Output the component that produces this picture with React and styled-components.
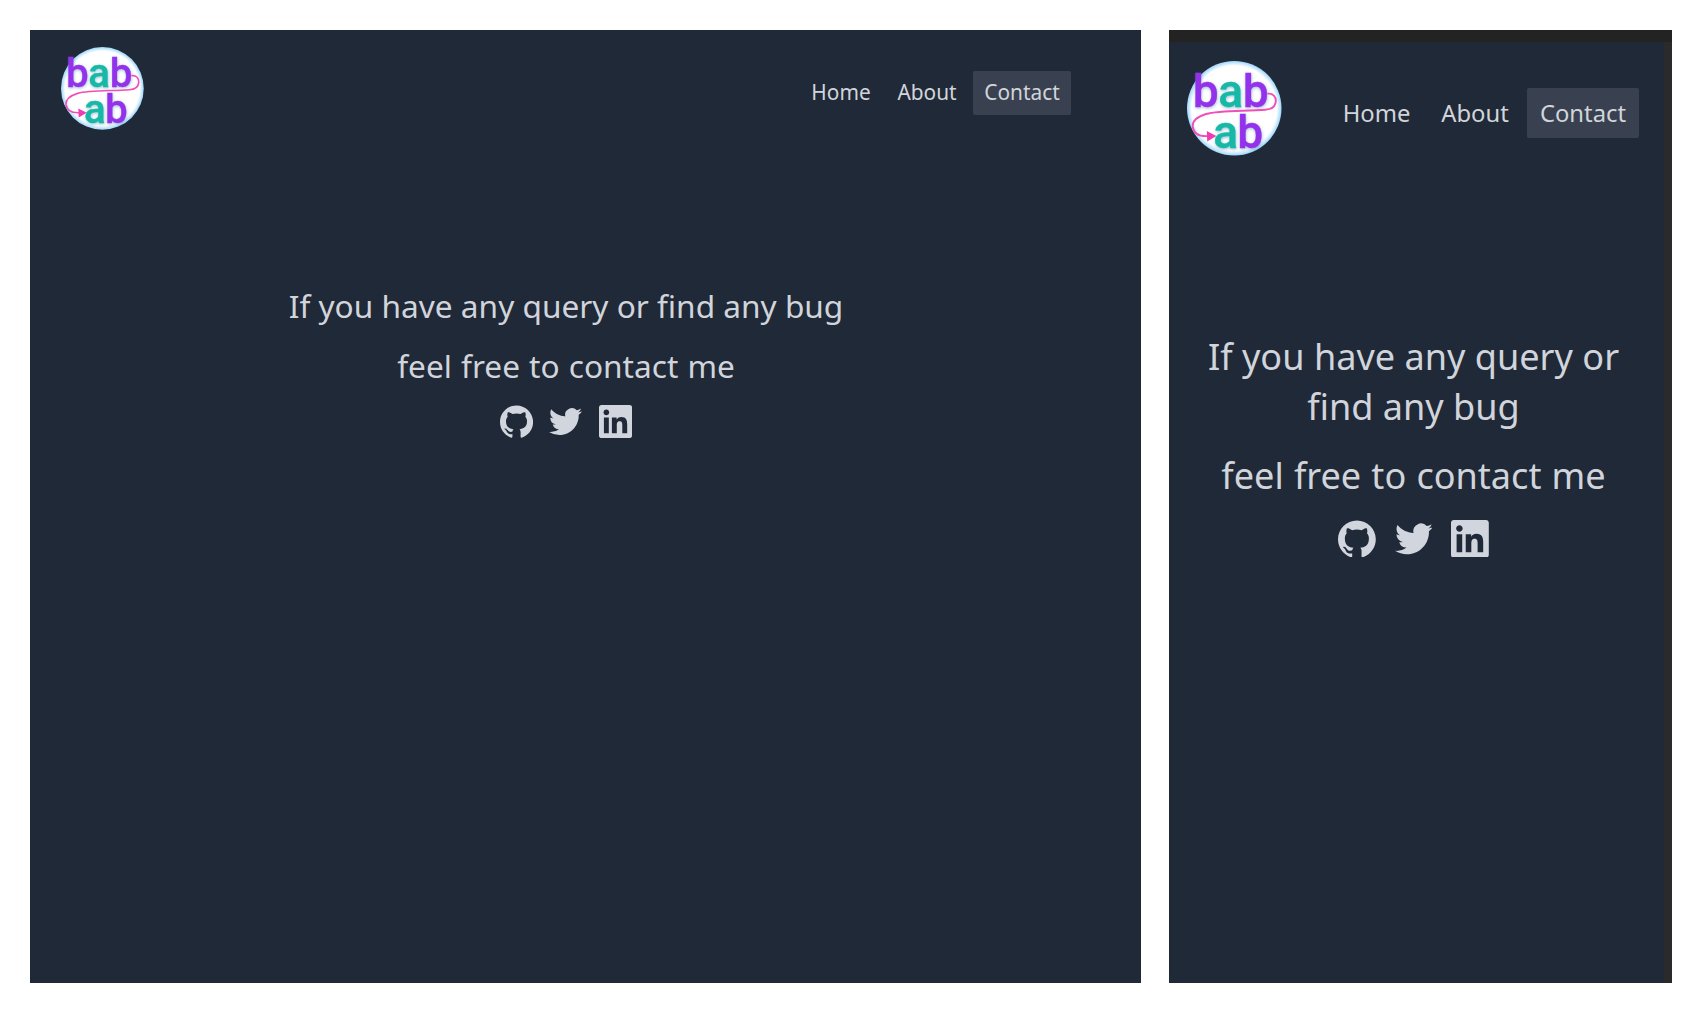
import React from 'react';
import styled, { createGlobalStyle } from 'styled-components';

const GlobalStyle = createGlobalStyle`
  *, *::before, *::after { box-sizing: border-box; }
  body { margin: 0; background: #fff; }
`;

const Page = styled.main`
  display: flex;
  gap: 28px;
  width: 1701px;
  height: 1012px;
  padding: 30px 29px 29px 30px;
  font-family: 'Noto Sans', 'Open Sans', sans-serif;
  color: #d1d5db;
`;

const Frame = styled.section`
  width: ${(p) => (p.$mobile ? '503px' : '1111px')};
  height: 953px;
  padding: ${(p) => (p.$mobile ? '12px 8px 0 0' : '0')};
  background: linear-gradient(#232323 12px, #2a2a2c 12px);
`;

const Screen = styled.div`
  height: 100%;
  background: #202937;
  font-size: ${(p) => (p.$mobile ? '18.9px' : '16.55px')};
`;

const Header = styled.header`
  display: flex;
  justify-content: space-between;
  align-items: flex-start;
  padding: ${(p) => (p.$mobile ? '19px 25px 0 18px' : '17px 70px 0 30.5px')};
  height: ${(p) => (p.$mobile ? '289px' : '254px')};
`;

const LogoMark = styled.svg`
  display: block;
  width: 5em;
  height: 5em;
  overflow: visible;
`;

const Nav = styled.nav`
  display: flex;
  gap: ${(p) => (p.$mobile ? '5px' : '4px')};
  padding-top: ${(p) => (p.$mobile ? '27px' : '24px')};
`;

const NavItem = styled.a`
  display: flex;
  align-items: center;
  justify-content: center;
  height: 2.65em;
  width: ${(p) => p.$width}px;
  border-radius: 2px;
  background: ${(p) => (p.$active ? '#394150' : 'transparent')};
`;

const NavLabel = styled.span`
  font-size: 1.26em;
  line-height: 1.3;
`;

const Content = styled.div`
  display: flex;
  flex-direction: column;
  align-items: center;
  padding-right: ${(p) => (p.$mobile ? '6px' : '39px')};
`;

const Message = styled.p`
  margin: 0 0 ${(p) => (p.$mobile ? '19px' : '16.5px')};
  font-size: 1.91em;
  line-height: ${(p) => (p.$mobile ? '50px' : '43.5px')};
  text-align: center;
`;

const Line = styled.span`
  display: block;
  white-space: nowrap;
  word-spacing: ${(p) => p.$space || 0}px;
`;

const Socials = styled.div`
  display: flex;
  gap: 1em;
  margin-top: 0.5px;
`;

const SocialIcon = styled.svg`
  display: block;
  width: 2em;
  height: 2em;
  fill: #d1d5de;
`;

const icons = [
  'M12 .297c-6.63 0-12 5.373-12 12 0 5.303 3.438 9.8 8.205 11.385.6.113.82-.258.82-.577 0-.285-.01-1.04-.015-2.04-3.338.724-4.042-1.61-4.042-1.61C4.422 18.07 3.633 17.7 3.633 17.7c-1.087-.744.084-.729.084-.729 1.205.084 1.838 1.236 1.838 1.236 1.07 1.835 2.809 1.305 3.495.998.108-.776.417-1.305.76-1.605-2.665-.3-5.466-1.332-5.466-5.93 0-1.31.465-2.38 1.235-3.22-.135-.303-.54-1.523.105-3.176 0 0 1.005-.322 3.3 1.23.96-.267 1.98-.399 3-.405 1.02.006 2.04.138 3 .405 2.28-1.552 3.285-1.23 3.285-1.23.645 1.653.24 2.873.12 3.176.765.84 1.23 1.91 1.23 3.22 0 4.61-2.805 5.625-5.475 5.92.42.36.81 1.096.81 2.22 0 1.606-.015 2.896-.015 3.286 0 .315.21.69.825.57C20.565 22.092 24 17.592 24 12.297c0-6.627-5.373-12-12-12',
  'M23.953 4.57a10 10 0 01-2.825.775 4.958 4.958 0 002.163-2.723c-.951.555-2.005.959-3.127 1.184a4.92 4.92 0 00-8.384 4.482C7.69 8.095 4.067 6.13 1.64 3.162a4.822 4.822 0 00-.666 2.475c0 1.71.87 3.213 2.188 4.096a4.904 4.904 0 01-2.228-.616v.06a4.923 4.923 0 003.946 4.827 4.996 4.996 0 01-2.212.085 4.936 4.936 0 004.604 3.417 9.867 9.867 0 01-6.102 2.105c-.39 0-.779-.023-1.17-.067a13.995 13.995 0 007.557 2.209c9.053 0 13.998-7.496 13.998-13.985 0-.21 0-.42-.015-.63A9.935 9.935 0 0024 4.59z',
  'M20.447 20.452h-3.554v-5.569c0-1.328-.027-3.037-1.852-3.037-1.853 0-2.136 1.445-2.136 2.939v5.667H9.351V9h3.414v1.561h.046c.477-.9 1.637-1.85 3.37-1.85 3.601 0 4.267 2.37 4.267 5.455v6.286zM5.337 7.433c-1.144 0-2.063-.926-2.063-2.065 0-1.138.92-2.063 2.063-2.063 1.14 0 2.064.925 2.064 2.063 0 1.139-.925 2.065-2.064 2.065zm1.782 13.019H3.555V9h3.564v11.452zM22.225 0H1.771C.792 0 0 .774 0 1.729v20.542C0 23.227.792 24 1.771 24h20.451C23.2 24 24 23.227 24 22.271V1.729C24 .774 23.2 0 22.222 0h.003z',
];

function Logo({ id }) {
  return (
    <LogoMark viewBox="0 0 248 248">
      <defs>
        <filter id={id} x="-20%" y="-20%" width="140%" height="140%">
          <feDropShadow dx="1" dy="3" stdDeviation="4" floodColor="#2f6f9f" floodOpacity="0.45" />
        </filter>
        <radialGradient id={id + 'bg'}>
          <stop offset="0.9" stopColor="#fff" />
          <stop offset="0.95" stopColor="#cdebfd" />
          <stop offset="1" stopColor="#9dd6f8" />
        </radialGradient>
      </defs>
      <circle cx="124" cy="124" r="124" fill={`url(#${id}bg)`} />
      <g
        filter={`url(#${id})`}
        fontFamily="Roboto, sans-serif"
        fontWeight="500"
        fontSize="121"
        fill="#9333ea"
        stroke="#9333ea"
        strokeWidth="1"
      >
        <text y="120">
          <tspan x="15">b</tspan>
          <tspan x="82" fill="#14b8a6" stroke="#14b8a6">a</tspan>
          <tspan x="146">b</tspan>
        </text>
        <text y="228">
          <tspan x="69" fill="#14b8a6" stroke="#14b8a6">a</tspan>
          <tspan x="132">b</tspan>
        </text>
      </g>
      <path
        d="M211 86C226 84 234 94 233 106C232 120 222 127 205 128C150 132 85 129 50 139C24 147 14 158 15 172C17 190 30 198 54 197"
        fill="none"
        stroke="#f14fb8"
        strokeWidth="5"
      />
      <path d="M52 184L77 197L53 211Z" fill="#f03cb4" />
    </LogoMark>
  );
}

function ContactScreen({ mobile, nav, messages }) {
  return (
    <Frame $mobile={mobile}>
      <Screen $mobile={mobile}>
        <Header $mobile={mobile}>
          <Logo id={mobile ? 'lm' : 'ld'} />
          <Nav $mobile={mobile}>
            {nav.map((item) => (
              <NavItem key={item.label} $width={item.width} $active={item.active}>
                <NavLabel>{item.label}</NavLabel>
              </NavItem>
            ))}
          </Nav>
        </Header>
        <Content $mobile={mobile}>
          {messages.map((lines, i) => (
            <Message key={i} $mobile={mobile}>
              {lines.map((line) => (
                <Line key={line.text} $space={line.space}>{line.text}</Line>
              ))}
            </Message>
          ))}
          <Socials>
            {icons.map((d) => (
              <SocialIcon key={d} viewBox="0 0 24 24"><path d={d} /></SocialIcon>
            ))}
          </Socials>
        </Content>
      </Screen>
    </Frame>
  );
}

export default function App() {
  return (
    <>
      <GlobalStyle />
      <Page>
        <ContactScreen
          nav={[
            { label: 'Home', width: 80 },
            { label: 'About', width: 84 },
            { label: 'Contact', width: 98, active: true },
          ]}
          messages={[
            [{ text: 'If you have any query or find any bug' }],
            [{ text: 'feel free to contact me', space: 0.9 }],
          ]}
        />
        <ContactScreen
          mobile
          nav={[
            { label: 'Home', width: 93 },
            { label: 'About', width: 94 },
            { label: 'Contact', width: 112, active: true },
          ]}
          messages={[
            [{ text: 'If you have any query or' }, { text: 'find any bug' }],
            [{ text: 'feel free to contact me', space: 0.8 }],
          ]}
        />
      </Page>
    </>
  );
}
